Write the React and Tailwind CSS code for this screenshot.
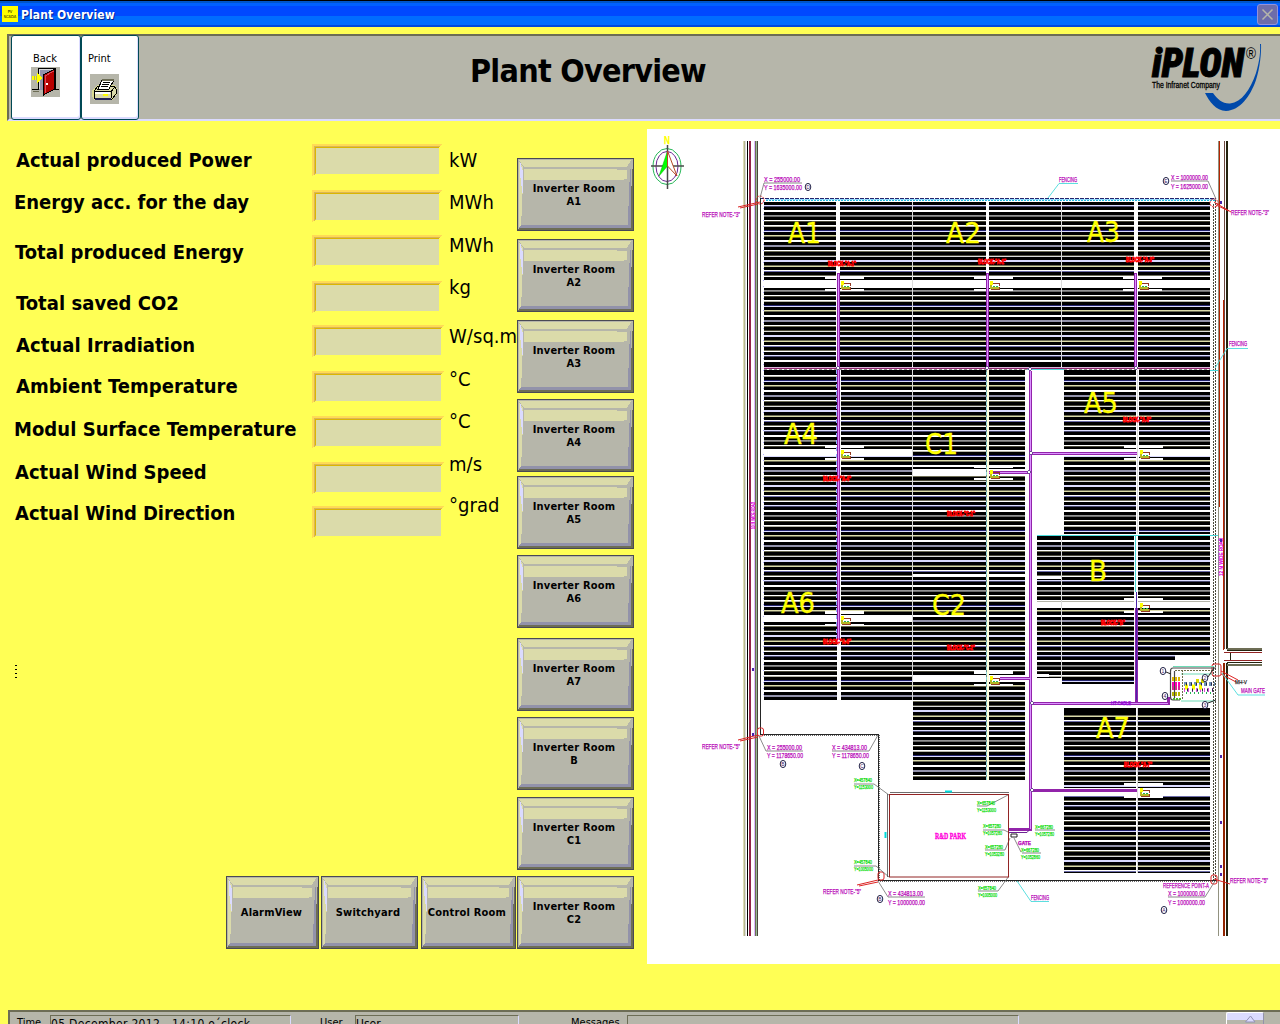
import React from 'react';

const UI = "font-['DejaVu_Sans_Condensed','DejaVu_Sans',sans-serif] [font-stretch:condensed]";

const LABELS = [
  ['Actual produced Power', 'ml-[16px] w-[236px]'],
  ['Energy acc. for the day', 'ml-[14px] mt-[18px] w-[235px]'],
  ['Total produced Energy', 'ml-[15px] mt-[26px] w-[229px] tracking-[0.05px]'],
  ['Total saved CO2', 'ml-[16px] mt-[27px] w-[163px] tracking-[0.05px]'],
  ['Actual Irradiation', 'ml-[16px] mt-[18px] w-[179px] tracking-[0.05px]'],
  ['Ambient Temperature', 'ml-[16px] mt-[17px] w-[222px] tracking-[0.05px]'],
  ['Modul Surface Temperature', 'ml-[14px] mt-[19px] w-[283px] tracking-[0.05px]'],
  ['Actual Wind Speed', 'ml-[15px] mt-[19px] w-[191px]'],
  ['Actual Wind Direction', 'ml-[15px] mt-[17px] w-[220px] tracking-[-0.05px]'],
];

const FIELDS = [
  [131, ''],
  [131, 'mt-[14px]'],
  [131, 'mt-[13px]'],
  [131, 'mt-[14px]'],
  [133, 'mt-[12px]'],
  [133, 'mt-[14px]'],
  [133, 'mt-[13px]'],
  [133, 'mt-[14px]'],
  [133, 'mt-[12px]'],
];

const UNITS = [
  ['kW', ''],
  ['MWh', 'mt-[18px]'],
  ['MWh', 'mt-[19px]'],
  ['kg', 'mt-[18px]'],
  ['W/sq.m', 'mt-[25px]'],
  ['°C', 'mt-[19px]'],
  ['°C', 'mt-[18px]'],
  ['m/s', 'mt-[19px]'],
  ['°grad', 'mt-[17px]'],
];

const ROOMS = [
  ['A1', ''],
  ['A2', 'mt-[8px]'],
  ['A3', 'mt-[8px]'],
  ['A4', 'mt-[6px]'],
  ['A5', 'mt-[4px]'],
  ['A6', 'mt-[6px]'],
  ['A7', 'mt-[10px]'],
  ['B', 'mt-[6px]'],
  ['C1', 'mt-[7px]'],
];

function PanelButton({ w, className, children }) {
  return (
    <button className={`relative block h-[73px] shrink-0 text-center text-[11px] leading-[13px] font-bold tracking-[0.2px] whitespace-nowrap text-black ${className}`}>
      <svg className="absolute inset-0 block" width={w} height="73" shapeRendering="crispEdges">
        <rect width={w} height="73" fill="#494955" />
        <rect x="1" y="1" width={w - 2} height="71" fill="#b6b6aa" />
        <polygon points={`2,2 ${w - 3},2 ${w - 7},9 7,9`} fill="#dbdbaa" />
        <polygon points="2,3 6,9 6,22 5,50 4,67 2,70" fill="#dbdbaa" />
        <rect x="7" y="11" width={w - 14} height="11" fill="#dbdbaa" />
        <rect x={w - 17} y="11" width="10" height="1" fill="#b6b6aa" />
        <rect x={w - 10} y="21" width="3" height="1" fill="#b6b6aa" />
        <polygon points="3,5 5,12 6,35 4,20" fill="#dbdbff" stroke="#dbdbff" strokeWidth="1" />
        <polygon points={`${w - 3},5 ${w - 5},30 ${w - 6},67 ${w - 3},70`} fill="#9292aa" />
        <polygon points={`4,67 ${w - 5},67 ${w - 3},70 2,70`} fill="#9292aa" />
        <polygon points={`${w - 1},3 ${w - 3},36 ${w - 3},70 2,70 1,72 ${w - 1},72`} fill="#6d6d55" />
      </svg>
      <span className="relative block">{children}</span>
    </button>
  );
}

function ValueField({ w, className }) {
  return (
    <div className={`h-[32px] ${className}`}>
      <svg width={w} height="32" className="block" shapeRendering="crispEdges">
        <polygon points={`0,0 ${w},0 ${w - 5},4 4,4 4,29 0,32`} fill="#ffdb55" />
        <polygon points={`2,2 ${w - 3},2 ${w - 5},4 4,4 4,29 2,31`} fill="#dbb655" />
        <rect x="3" y="3" width={w - 7} height="1" fill="#dbb600" />
        <rect x="3" y="3" width="1" height="26" fill="#dbb600" />
        <rect x="4" y="4" width={w - 8} height="26" fill="#dbdbaa" />
      </svg>
    </div>
  );
}

function Logo() {
  return (
    <svg width="120" height="72" viewBox="1145 40 120 72" className="block">
      <path d="M1260 44C1260.500 50 1260 60 1256 73C1250 90 1242 102 1230 103.500C1223 104 1217 99 1213 93L1205 93C1209 101 1216 111 1226 111C1240 110 1250 97 1256 80C1260 68 1261.500 52 1261 44Z" fill="#0049aa" />
      <text x="1152" y="77" fontSize="41" fontWeight="900" fontStyle="italic" fontFamily="Roboto, sans-serif" textLength="92" lengthAdjust="spacingAndGlyphs" stroke="#000" strokeWidth="1">iPLON</text>
      <text x="1246" y="59" fontSize="16" fontFamily="Liberation Sans, sans-serif" textLength="10" lengthAdjust="spacingAndGlyphs">®</text>
      <text x="1152" y="88" fontSize="9" fontFamily="Liberation Sans, sans-serif" textLength="68" lengthAdjust="spacingAndGlyphs" stroke="#000" strokeWidth="0.3">The Infranet Company</text>
    </svg>
  );
}

function DoorIcon() {
  return (
    <svg width="29" height="30" viewBox="0 0 29 30" shapeRendering="crispEdges" className="block">
      <rect width="29" height="30" fill="#b6b6aa" />
      <path d="M7 1H24V23H7Z" fill="#9292aa" />
      <path d="M7.500 23V1.500H24V4M24.500 2V22" stroke="#000" fill="none" />
      <path d="M8.500 22V2.500H22" stroke="#dbdbdb" fill="none" />
      <path d="M1 22.500H8M23 22.500H28" stroke="#000" fill="none" />
      <path d="M2 24.500H8" stroke="#6d6d55" />
      <path d="M12.500 8L23.500 2V22L12.500 28Z" fill="#b60000" stroke="#000" />
      <path d="M14 9L23 4M14 9V26" stroke="#db4955" fill="none" />
      <rect x="15" y="16" width="2" height="2" fill="#fff" />
      <path d="M1 9H6V6L11 11L6 16V13H1Z" fill="#ff0" />
      <path d="M3 9V13M5 9V13" stroke="#b6b655" />
    </svg>
  );
}

function PrinterIcon() {
  return (
    <svg width="29" height="30" viewBox="0 0 29 30" shapeRendering="crispEdges" className="block">
      <rect width="29" height="30" fill="#b6b6aa" />
      <path d="M3 17L8 12L24 12L26 15V20L22 25H5L3 22Z" fill="#dbdbaa" stroke="#dbdb92" strokeWidth="2" />
      <path d="M4 17L8 12L24 12L26 15V20L22 25H5L4 23Z" fill="#dbdbaa" stroke="#000" />
      <path d="M12 6H24L19 15H8Z" fill="#fff" />
      <path d="M12 6L8 15H19L24 6" fill="none" stroke="#000" />
      <path d="M12 5.500H24" stroke="#6d6d55" strokeWidth="2" />
      <path d="M13 8.500H20M12 10.500H19M11 12.500H18" stroke="#000" />
      <path d="M4 17.500H21L25 13M21.500 17V24" stroke="#000" fill="none" />
      <rect x="5" y="18" width="15" height="2" fill="#fff" />
      <rect x="13" y="20" width="5" height="2" fill="#ff0" />
      <path d="M5 25H21" stroke="#242455" strokeWidth="2" />
    </svg>
  );
}

/* Colour pairs of the aisles between module rows, top pixel and bottom pixel. */
const AISLES = [
  ['#6d6d5a', '#ffffff'], ['#dbdbff', '#49496d'], ['#ffffff', '#ffffff'], ['#929292', '#6d6d6d'], ['#ffffff', '#49493a'],
  ['#ffffff', '#b6b6aa'], ['#24246d', '#dbdbff'], ['#dbdbaa', '#6d6d55'], ['#ffffff', '#ffffff'], ['#9292aa', '#9292aa'],
  ['#ffffff', '#6d6d55'], ['#49493a', '#dbdbdb'], ['#dbdbff', '#dbdbff'], ['#6d6d55', '#dbdbaa'], ['#ffffff', '#6d6daa'],
];

function Field({ x, x2, y, y2 }) {
  const rows = [];
  for (let k = Math.ceil((y + 3 - 200) / 5); 200 + k * 5 < y2 - 2; k += 1) {
    const [a, b] = AISLES[k % AISLES.length];
    const top = 200 + k * 5;
    rows.push(<rect key={`a${k}`} x={x} y={top} width={x2 - x} height="1" fill={a} />);
    rows.push(<rect key={`b${k}`} x={x} y={top + 1} width={x2 - x} height="1" fill={b} />);
  }
  return (
    <g>
      <rect x={x} y={y} width={x2 - x} height={y2 - y} fill="#000" />
      {rows}
    </g>
  );
}

const FIELD_AREAS = [
  [764, 836, 202, 367], [840, 912, 202, 367], [913, 986, 202, 367], [989, 1061, 202, 367], [1062, 1134, 202, 367], [1138, 1210, 202, 367],
  [764, 837, 370, 700], [841, 912, 370, 700],
  [913, 986, 370, 780], [989, 1025, 370, 780],
  [1064, 1136, 370, 534], [1139, 1210, 370, 534],
  [1037, 1061, 536, 678], [1062, 1134, 536, 684], [1138, 1210, 536, 660],
  [1064, 1136, 708, 873], [1138, 1210, 708, 873],
];

function T({ x, y, w, s = 8, c = '#b600b6', bold, font = 'Liberation Sans, sans-serif', children }) {
  return (
    <text x={x} y={y} fontSize={s} fill={c} stroke={c} strokeWidth="0.25" fontFamily={font} fontWeight={bold ? 700 : 400} textLength={w} lengthAdjust="spacingAndGlyphs">
      {children}
    </text>
  );
}

const AREA_NAMES = [
  ['A1', 788, 243, 33], ['A2', 946, 243, 35], ['A3', 1087, 242, 33], ['A4', 784, 444, 34], ['C1', 925, 454, 33],
  ['A5', 1084, 413, 34], ['A6', 781, 613, 34], ['C2', 932, 615, 34], ['B', 1089, 581, 18], ['A7', 1096, 738, 34],
];

const BLOCK_TAGS = [
  ['BLOCK-"A-1"', 828, 266], ['BLOCK-"A-2"', 978, 264], ['BLOCK-"A-3"', 1126, 262], ['BLOCK-"A-4"', 823, 481], ['BLOCK-"C-1"', 947, 516],
  ['BLOCK-"A-5"', 1123, 422], ['BLOCK-"A-6"', 823, 644], ['BLOCK-"C-2"', 947, 650], ['BLOCK-"B"', 1101, 625], ['BLOCK-"A-7"', 1124, 767],
];

const STATIONS = [
  [838, 280], [987, 280], [1136, 280], [838, 449], [987, 469], [1137, 449], [838, 615], [987, 675], [1137, 602], [1137, 787],
];

const NOTES = [
  [702, 217, '3'], [1231, 215, '3'], [702, 749, '5'], [823, 894, '5'], [1230, 883, '5'],
];

const PARK_COORDS = [
  [854, 782, 'X=457840', 'Y=1153000'], [854, 864, 'X=457840', 'Y=1005000'], [977, 805, 'X=657840', 'Y=1153000'],
  [983, 828, 'X=657280', 'Y=1057280'], [985, 849, 'X=657280', 'Y=1053280'], [1035, 829, 'X=667280', 'Y=1057280'],
  [1021, 852, 'X=667280', 'Y=1052860'], [978, 890, 'X=657840', 'Y=1005000'],
];

function Marker({ x, y, children }) {
  return (
    <g>
      <ellipse cx={x} cy={y} rx="2.800" ry="3.600" fill="none" stroke="#242449" />
      <text x={x} y={y + 2} fontSize="5" textAnchor="middle" fontFamily="Liberation Sans, sans-serif" fill="#49246d">{children}</text>
    </g>
  );
}

function SiteMap() {
  return (
    <svg width="633" height="835" viewBox="647 129 633 835" className="block shrink-0 bg-white" shapeRendering="crispEdges">
      {/* west road */}
      <rect x="744" y="141" width="1" height="795" fill="#b6b692" />
      <rect x="743" y="141" width="1" height="795" fill="#dbdbb6" />
      <rect x="747" y="141" width="1" height="795" fill="#000" />
      <rect x="745" y="141" width="1" height="795" fill="#dbdbdb" />
      <rect x="749" y="141" width="2" height="795" fill="#922449" />
      <rect x="754" y="141" width="1" height="795" fill="#dbb6ff" />
      <rect x="755" y="141" width="1" height="795" fill="#6d6d55" />
      <rect x="756" y="141" width="1" height="795" fill="#92b692" />
      <rect x="757" y="141" width="1" height="795" fill="#49493a" />
      {/* east road */}
      <rect x="1218" y="141" width="1" height="795" fill="#929280" />
      <rect x="1219" y="141" width="1" height="366" fill="#b62400" />
      <rect x="1224" y="141" width="1" height="508" fill="#6d4940" />
      <rect x="1226" y="141" width="2" height="508" fill="#24240f" />
      <rect x="1223" y="300" width="1" height="350" fill="#b62400" />
      <rect x="1223" y="663" width="2" height="273" fill="#922400" />
      <rect x="1226" y="663" width="2" height="273" fill="#24240f" />
      <path d="M1224 652.500H1262M1224 660.500H1262" stroke="#922424" />
      <path d="M1227 648.500H1262M1227 664.500H1262" stroke="#6d6d55" strokeWidth="2" />
      <path d="M1227 650.500H1262M1227 662.500H1262M1230.500 653V660" stroke="#24240f" />

      {/* fence */}
      <path d="M760 198.500H1216" stroke="#24246d" strokeDasharray="4 1" />
      <path d="M766 199.500H1216" stroke="#92dbff" />
      <path d="M766 200.500H1216" stroke="#24b6db" strokeDasharray="2 1" />
      <path d="M760.500 198V734H878V880.500H1217" fill="none" stroke="#242424" />
      <path d="M762 735.500H878M879.500 735V881M880 881.500H1217" fill="none" stroke="#6d6d6d" strokeDasharray="1 1" />
      <path d="M1213.500 204V880M1215.500 200V880" stroke="#49493a" strokeDasharray="2 1" />
      <path d="M763.500 202V700" stroke="#b6b6ff" strokeDasharray="1 5" />

      {FIELD_AREAS.map(([x, x2, y, y2]) => <Field key={`${x}-${y}`} x={x} x2={x2} y={y} y2={y2} />)}

      {/* access aisles */}
      <g fill="#fff">
        <rect x="764" y="280" width="148" height="8" /><rect x="913" y="280" width="297" height="8" />
        <rect x="764" y="449" width="148" height="7" /><rect x="764" y="615" width="148" height="7" />
        <rect x="913" y="469" width="112" height="7" /><rect x="913" y="675" width="112" height="7" />
        <rect x="913" y="574" width="112" height="2" />
        <rect x="1064" y="449" width="146" height="7" /><rect x="1037" y="602" width="173" height="6" />
        <rect x="1064" y="788" width="146" height="7" />
        <rect x="1175" y="655" width="35" height="5" />
        <rect x="1037" y="577" width="24" height="2" /><rect x="1037" y="674" width="12" height="3" />
      </g>
      {STATIONS.map(([x, y]) => (
        <g key={`${x}-${y}`}>
          <rect x={x - 13} y={y - 4} width="39" height="3" fill="#fff" />
          <rect x={x - 13} y={y + 9} width="39" height="2" fill="#fff" />
        </g>
      ))}

      <g fill="#fff">
        <rect x="836" y="203" width="4" height="70" /><rect x="986" y="203" width="3" height="70" /><rect x="1134" y="203" width="4" height="70" />
        <rect x="837" y="640" width="4" height="60" />
      </g>
      <path d="M912.500 202V366M912.500 370V700M1061.500 202V366M1137.500 370V534M1061.500 536V678M1137.500 708V873" stroke="#dbdbdb" />
      <path d="M987.500 370V780" stroke="#ffffdb" strokeWidth="3" />
      <path d="M986.500 370V780" stroke="#92dbdb" />
      <path d="M986.500 370V780" stroke="#6d9292" strokeDasharray="2 3" />

      {/* cable routes */}
      <g fill="none" stroke="#9224aa" strokeWidth="3">
        <path d="M838.500 273V368M987.500 273V368M1135.500 273V368M838.500 370V640" />
        <path d="M764 368H1210" stroke="#92246d" strokeWidth="2" />
        <path d="M1030.500 371V829H1009" />
        <path d="M1031 453.500H1137M989 472.500H1030M1000 678.500H1030M1031 703.500H1168V697M1136.500 608V703M1031 790.500H1137" />
      </g>
      <g fill="none" stroke="#db92ff">
        <path d="M838.500 274V640M987.500 274V368M1135.500 274V368M1030.500 371V829M1031 453.500H1137M1000 678.500H1030M1031 703.500H1168M989 472.500H1030" />
      </g>
      <path d="M836.500 370V640" stroke="#92b6ff" strokeDasharray="4 3" />
      <path d="M764 367.500H1210" stroke="#dbb6db" />
      <path d="M764 369.500H1030M1064 369.500H1210" stroke="#929292" strokeDasharray="3 2" />
      <path d="M1027 369.500H1064M1037 535.500H1218M1135.500 535V592M1210 370.500H1218" stroke="#49dbdb" />
      <path d="M1136.500 592V700" stroke="#4924aa" />
      {[[838, 368], [987, 368], [1136, 368], [1030, 369], [1031, 453], [1029, 472], [1032, 703], [1032, 790]].map(([x, y]) => (
        <path key={`${x}-${y}`} d={`M${x - 2} ${y}L${x} ${y - 2}L${x + 2} ${y}L${x} ${y + 2}Z`} fill="#fff" stroke="#6d4992" />
      ))}
      {STATIONS.map(([x, y]) => (
        <g key={`st${x}-${y}`}>
          <path d={`M${x + 4} ${y + 1}V${y + 8}H${x + 13}`} fill="none" stroke="#b6b624" strokeWidth="2" />
          <path d={`M${x + 6} ${y + 3.5}H${x + 12}V${y + 6}M${x + 4} ${y + 9.5}H${x + 12}V${y + 7}`} fill="none" stroke="#923a24" />
          <path d={`M${x + 6} ${y + 6.5}H${x + 11}`} stroke="#24b655" strokeDasharray="2 1" />
          <rect x={x + 3} y={y + 1} width="3" height="4" fill="#ff0" />
        </g>
      ))}

      <g shapeRendering="auto">
        {BLOCK_TAGS.map(([t, x, y]) => (
          <text key={t} x={x} y={y} fontSize="7" fill="#f00" stroke="#f00" strokeWidth="0.9" fontFamily="Liberation Sans, sans-serif" fontWeight="700" textLength={t.length > 9 ? 28 : 24} lengthAdjust="spacingAndGlyphs">{t}</text>
        ))}
        {AREA_NAMES.map(([t, x, y, w]) => (
          <text key={t} x={x} y={y} fontSize="28.500" fill="#ff0" stroke="#ff0" strokeWidth="0.3" fontFamily="DejaVu Sans, sans-serif" textLength={w} lengthAdjust="spacingAndGlyphs">{t}</text>
        ))}

        {/* north arrow */}
        <T x={664} y={144} w={6} s={10} c="#ffff00" bold>N</T>
        <ellipse cx="667" cy="166.500" rx="14" ry="18" fill="none" stroke="#24b655" />
        <ellipse cx="667" cy="166.500" rx="11" ry="15" fill="none" stroke="#6d2492" />
        <path d="M651 166H684M667.500 145V189" stroke="#494949" strokeWidth="1.500" />
        <path d="M667.500 151L659 176L667.500 166Z" fill="#00ff00" stroke="#00b600" strokeWidth="0.500" />
        <path d="M667.500 151L677 176L667.500 166Z" fill="#fff" stroke="#b64924" />

        {/* corner callouts */}
        {NOTES.map(([x, y, n]) => <T key={`${x}-${y}`} x={x} y={y} w={38} s={8}>{`REFER NOTE-"${n}"`}</T>)}
        <g stroke="#db2424" fill="none">
          <path d="M738 207L760 202M740 208L758 204M1231 212L1214 202M1229 211L1216 205M738 740L758 735M740 741L758 737M857 885L878 880M859 886L878 882M1230 884L1214 879" />
          <circle cx="760" cy="200" r="4" strokeDasharray="2 1" />
          <circle cx="1214" cy="203" r="4" strokeDasharray="2 1" />
          <rect x="757.500" y="728" width="6" height="8" rx="2" />
          <rect x="878" y="872" width="6" height="8" rx="2" />
          <rect x="1211" y="875" width="6" height="9" rx="2" />
          <rect x="1212" y="664" width="9" height="12" rx="2" />
          <path d="M1221 671L1238 680M1221 674L1236 682" />
        </g>
        <g stroke="#6d6d6d" strokeWidth="0.800" fill="none">
          <path d="M802 183H764L760 198M1171 181H1208L1216 199M759 736L766 751H803M832 751H869L878 735M878 881L888 897H925M1168 897H1205L1215 881" />
          <path d="M854 784H874L889 795M854 866H876L889 877M977 806H987L1008 795M983 830H1004L1010 833M985 850H1005L1010 838M978 891H998L1009 876M1055 830H1035M1022 853H1041M1014 838L1021 852" />
        </g>
        <T x={764} y={182} w={36}>X = 255000.00</T>
        <T x={764} y={190} w={38}>Y = 1635000.00</T>
        <Marker x={808} y={187}>D</Marker>
        <T x={1171} y={180} w={37}>X = 1000000.00</T>
        <T x={1171} y={189} w={37}>Y = 1625000.00</T>
        <Marker x={1166} y={181}>E</Marker>
        <T x={767} y={750} w={35}>X = 255000.00</T>
        <T x={767} y={758} w={36}>Y = 1178650.00</T>
        <Marker x={783} y={764}>B</Marker>
        <T x={832} y={750} w={35}>X = 434813.00</T>
        <T x={832} y={758} w={37}>Y = 1178650.00</T>
        <Marker x={862} y={766}>C</Marker>
        <T x={888} y={896} w={35}>X = 434813.00</T>
        <T x={888} y={905} w={37}>Y = 1000000.00</T>
        <Marker x={880} y={899}>B</Marker>
        <T x={1163} y={888} w={46}>REFERENCE POINT-A</T>
        <T x={1168} y={896} w={37}>X = 1000000.00</T>
        <T x={1168} y={905} w={37}>Y = 1000000.00</T>
        <Marker x={1164} y={910}>A</Marker>
        <T x={1059} y={182} w={18}>FENCING</T>
        <T x={1229} y={346} w={18}>FENCING</T>
        <T x={1031} y={900} w={18}>FENCING</T>
        <T x={1241} y={693} w={24}>MAIN GATE</T>
        <T x={1235} y={684} w={12} s={6} c="#242424">MH-V</T>
        <path d="M1078 183.500H1059L1048 198M1248 348.500H1227L1215 368M1049 901.500H1031L1017 881M1265 695H1238L1222 673" fill="none" stroke="#49dbdb" strokeWidth="0.900" />
        <text transform="translate(755 529) rotate(-90)" fontSize="6" fill="#db00db" stroke="#db00db" strokeWidth="0.3" fontFamily="Liberation Sans, sans-serif" textLength="27" lengthAdjust="spacingAndGlyphs">10 M WIDE ROAD</text>
        <text transform="translate(1223 576) rotate(-90)" fontSize="6" fill="#db00db" stroke="#db00db" strokeWidth="0.3" fontFamily="Liberation Sans, sans-serif" textLength="38" lengthAdjust="spacingAndGlyphs">12 M WIDE ROAD</text>

        {/* R&D park */}
        <rect x="889.500" y="794.500" width="119" height="82.500" fill="none" stroke="#922424" />
        <path d="M887.500 794V877M890 792.500H1009" stroke="#494949" strokeWidth="0.800" />
        <path d="M945 791.500H952M885.500 832V838" stroke="#00dbdb" strokeWidth="2" />
        <g stroke="#ff00db" strokeWidth="0.4">
          <text x="935" y="839" fontSize="9" fill="#ff00db" fontFamily="Liberation Serif, serif" fontWeight="700" textLength="31" lengthAdjust="spacingAndGlyphs">R&amp;D PARK</text>
        </g>
        {PARK_COORDS.map(([x, y, a, b]) => (
          <g key={`${x}-${y}`}>
            <T x={x} y={y} w={18} s={6} c="#00db00">{a}</T>
            <T x={x} y={y + 6.5} w={19} s={6} c="#00db00">{b}</T>
          </g>
        ))}
        <path d="M1009 832.500H1027L1030 829" fill="none" stroke="#6d2492" />
        <path d="M1011 834H1017V837H1011Z" fill="#fff" stroke="#242424" />
        <T x={1018} y={845} w={13} s={4.5} c="#b600b6" bold>GATE</T>
        <T x={1111} y={705} w={20} s={5} c="#9200db">HT CABLE</T>

        {/* switchyard */}
        <path d="M1216 668H1173Q1170.500 668 1170.500 671V697Q1170.500 700 1173 700H1180M1174.500 671V698" fill="none" stroke="#494949" strokeWidth="1.200" />
        <path d="M1173 666.500H1214M1181 674H1212M1181 701H1214" stroke="#6ddbb6" />
        <path d="M1182.500 670V699M1175 670.500H1213" stroke="#6d6d49" strokeDasharray="2 1" fill="none" />
        <g strokeWidth="4" strokeDasharray="2 1" fill="none">
          <path d="M1172 679H1181" stroke="#dbb600" /><path d="M1172 684H1181" stroke="#ff00b6" />
          <path d="M1172 688H1181" stroke="#db2492" /><path d="M1172 694H1181" stroke="#b6b600" />
          <path d="M1173 699H1181" stroke="#49b624" strokeWidth="2" />
          <path d="M1184 684H1215" stroke="#6d92b6" strokeDasharray="3 2" />
          <path d="M1184 690H1214" stroke="#db49db" strokeDasharray="1 3" />
          <path d="M1185 687H1205" stroke="#ffff00" strokeDasharray="3 4" strokeWidth="5" />
          <path d="M1196 681H1204" stroke="#dbdb00" strokeDasharray="3 2" />
          <path d="M1186 693H1212" stroke="#24b655" strokeDasharray="1 3" strokeWidth="2" />
          <path d="M1186 684H1215M1187 690H1214" stroke="#242449" strokeDasharray="1 4" strokeWidth="3" />
        </g>
        <Marker x={1163} y={671}>1</Marker>
        <Marker x={1165} y={696}>4</Marker>
        <Marker x={1205} y={678}>2</Marker>
        <Marker x={1205} y={705}>3</Marker>
        <path d="M1166 672L1171 674M1208 703L1216 700M1208 677L1214 668" stroke="#242424" />
        {[[753, 669], [753, 734], [1221, 202], [1221, 540], [1221, 756], [1221, 822], [1221, 866], [1221, 874]].map(([x, y]) => (
          <rect key={`${x}-${y}`} x={x - 1} y={y - 1} width="2" height="3" fill="#4924aa" />
        ))}
      </g>
    </svg>
  );
}

export default function App() {
  return (
    <div className={`flex h-[1024px] w-[1280px] flex-col overflow-hidden bg-[#ffff55] text-black ${UI}`}>
      <header className="flex h-[27px] shrink-0 items-center border-t border-black bg-[linear-gradient(#0055c8_0_2px,#0061ff_2px_5px,#0049ff_5px_15px,#006dff_15px_24px,#0049db_24px)] pl-[2px] pr-[2px]">
        <div className="flex h-[16px] w-[16px] flex-col items-center justify-center bg-[#ffff00] text-[4px] leading-[5px]">
          <span>PV</span>
          <span>SCADA</span>
        </div>
        <span className="mt-px ml-[3px] text-[12px] leading-[16px] font-bold tracking-[0.1px] text-white [text-shadow:1px_1px_0_#002492]">Plant Overview</span>
        <div className="ml-auto flex h-[21px] w-[21px] items-center justify-center rounded-[3px] border border-[#9292db] bg-[#6d6daa]">
          <svg width="13" height="13" viewBox="0 0 13 13"><path d="M1.500 1.500L11.500 11.500M11.500 1.500L1.500 11.500" stroke="#b6b6aa" strokeWidth="1.500" /></svg>
        </div>
      </header>

      <section className="mt-[7px] ml-[7px] flex h-[87px] shrink-0 border-t-2 border-b-2 border-l-2 border-t-[#6d6d55] border-b-[#dbdbff] border-l-[#6d6d55] bg-[#b6b6aa]">
        <button className="-mt-px ml-[2px] flex h-[85px] w-[70px] shrink-0 flex-col items-center rounded-[3px] border border-[#004955] bg-white pt-[15px] pr-[2px] shadow-[inset_-1px_-2px_0_#dbdbff]">
          <span className="text-[11px] leading-[15px]">Back</span>
          <span className="mt-px"><DoorIcon /></span>
        </button>
        <button className="-mt-px flex h-[85px] w-[58px] shrink-0 flex-col items-start rounded-[3px] border border-[#004955] bg-white pt-[15px] pl-[6px] shadow-[inset_-1px_-2px_0_#dbdbff]">
          <span className="text-[11px] leading-[15px]">Print</span>
          <span className="mt-[8px] ml-[2px]"><PrinterIcon /></span>
        </button>
        <h1 className="mt-[15px] ml-[331px] w-[240px] text-[32px] leading-[40px] font-bold tracking-[-0.75px] whitespace-nowrap">Plant Overview</h1>
        <div className="mt-[4px] ml-auto mr-[15px]"><Logo /></div>
      </section>

      <main className="flex h-[889px] shrink-0">
        <div className="flex w-[647px] shrink-0 flex-col">
          <div className="flex h-[755px]">
            <div className="w-[312px] shrink-0 pt-[27px]">
              {LABELS.map(([t, c]) => (
                <div key={t} className={`h-[24px] text-[20px] leading-[24px] font-bold whitespace-nowrap ${c}`}>{t}</div>
              ))}
              <div className="mt-[140px] ml-[15px] h-[14px] w-[2px] bg-[repeating-linear-gradient(#000_0_1px,transparent_1px_4px)]" />
            </div>
            <div className="w-[138px] shrink-0 pt-[23px]">
              {FIELDS.map(([w, c], i) => <ValueField key={i} w={w} className={c} />)}
            </div>
            <div className="w-[67px] shrink-0 pt-[27px]">
              {UNITS.map(([t, c], i) => (
                <div key={i} className={`-ml-px h-[24px] text-[20px] leading-[24px] tracking-[0.05px] whitespace-nowrap ${c}`}>{t}</div>
              ))}
            </div>
            <div className="w-[117px] shrink-0 pt-[37px]">
              {ROOMS.map(([r, c]) => (
                <PanelButton key={r} w={117} className={`w-[117px] pr-[3px] ${c}`}>Inverter Room<br />{r}</PanelButton>
              ))}
            </div>
          </div>
          <nav className="ml-[226px] flex">
            <PanelButton w={93} className="w-[93px] pr-[2px]">AlarmView</PanelButton>
            <PanelButton w={97} className="ml-[2px] w-[97px] pr-[3px]">Switchyard</PanelButton>
            <PanelButton w={95} className="ml-[3px] w-[95px] pr-[3px]">Control Room</PanelButton>
            <PanelButton w={117} className="ml-px w-[117px] pr-[3px]">Inverter Room<br />C2</PanelButton>
          </nav>
        </div>
        <div className="pt-[8px]"><SiteMap /></div>
      </main>

      <footer className="ml-[8px] flex h-[40px] shrink-0 items-start border-t-2 border-l-2 border-[#6d6d55] bg-[#b6b6aa] pt-[3px] text-[11px] leading-[14px] whitespace-nowrap">
        <span className="mt-px ml-[7px] w-[33px]">Time</span>
        <span className="h-[24px] w-[241px] border-t border-r border-l border-[#6d6d55] border-r-[#dbdbff] pt-px text-[12px] tracking-[0.32px]">05 December 2012 - 14:10 o´clock</span>
        <span className="mt-px ml-[29px] w-[35px]">User</span>
        <span className="h-[24px] w-[164px] border-t border-r border-l border-[#6d6d55] border-r-[#dbdbff] pt-px text-[12px]">User</span>
        <span className="mt-px ml-[52px] w-[56px]">Messages</span>
        <span className="h-[24px] w-[392px] border-t border-r border-l border-[#6d6d55] border-r-[#dbdbff]" />
        <div className="-mt-[3px] ml-[207px] h-[24px] w-[38px] rounded-t-[2px] border border-white border-r-[#9292aa] bg-[#dbdbff]">
          <svg width="36" height="16" viewBox="0 0 36 16" className="block">
            <rect y="7" width="36" height="9" fill="#b6b6aa" />
            <path d="M18.500 9H28L23.500 3Z" fill="#dbdbff" stroke="#9292b6" />
          </svg>
        </div>
      </footer>
    </div>
  );
}
